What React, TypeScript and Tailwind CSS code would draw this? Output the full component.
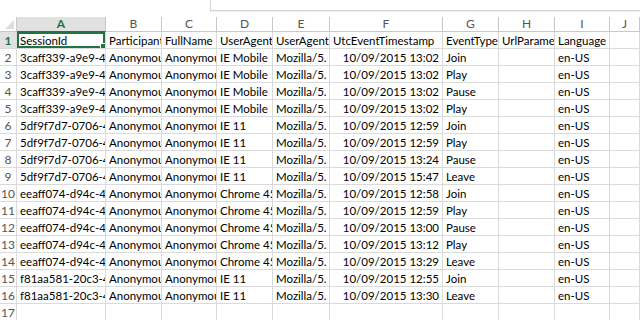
import React from "react";

const cols = ["A", "B", "C", "D", "E", "F", "G", "H", "I", "J"];

type Row = [string, string, string, string, string, string, string, string, string];

const header: Row = [
  "SessionId",
  "ParticipantId",
  "FullName",
  "UserAgentName",
  "UserAgentString",
  "UtcEventTimestamp",
  "EventType",
  "UrlParameters",
  "Language",
];

const rows: Row[] = [
  ["3caff339-a9e9-4", "Anonymous", "Anonymous", "IE Mobile", "Mozilla/5.", "10/09/2015 13:02", "Join", "", "en-US"],
  ["3caff339-a9e9-4", "Anonymous", "Anonymous", "IE Mobile", "Mozilla/5.", "10/09/2015 13:02", "Play", "", "en-US"],
  ["3caff339-a9e9-4", "Anonymous", "Anonymous", "IE Mobile", "Mozilla/5.", "10/09/2015 13:02", "Pause", "", "en-US"],
  ["3caff339-a9e9-4", "Anonymous", "Anonymous", "IE Mobile", "Mozilla/5.", "10/09/2015 13:02", "Play", "", "en-US"],
  ["5df9f7d7-0706-4", "Anonymous", "Anonymous", "IE 11", "Mozilla/5.", "10/09/2015 12:59", "Join", "", "en-US"],
  ["5df9f7d7-0706-4", "Anonymous", "Anonymous", "IE 11", "Mozilla/5.", "10/09/2015 12:59", "Play", "", "en-US"],
  ["5df9f7d7-0706-4", "Anonymous", "Anonymous", "IE 11", "Mozilla/5.", "10/09/2015 13:24", "Pause", "", "en-US"],
  ["5df9f7d7-0706-4", "Anonymous", "Anonymous", "IE 11", "Mozilla/5.", "10/09/2015 15:47", "Leave", "", "en-US"],
  ["eeaff074-d94c-4", "Anonymous", "Anonymous", "Chrome 45", "Mozilla/5.", "10/09/2015 12:58", "Join", "", "en-US"],
  ["eeaff074-d94c-4", "Anonymous", "Anonymous", "Chrome 45", "Mozilla/5.", "10/09/2015 12:59", "Play", "", "en-US"],
  ["eeaff074-d94c-4", "Anonymous", "Anonymous", "Chrome 45", "Mozilla/5.", "10/09/2015 13:00", "Pause", "", "en-US"],
  ["eeaff074-d94c-4", "Anonymous", "Anonymous", "Chrome 45", "Mozilla/5.", "10/09/2015 13:12", "Play", "", "en-US"],
  ["eeaff074-d94c-4", "Anonymous", "Anonymous", "Chrome 45", "Mozilla/5.", "10/09/2015 13:29", "Leave", "", "en-US"],
  ["f81aa581-20c3-4", "Anonymous", "Anonymous", "IE 11", "Mozilla/5.", "10/09/2015 12:55", "Join", "", "en-US"],
  ["f81aa581-20c3-4", "Anonymous", "Anonymous", "IE 11", "Mozilla/5.", "10/09/2015 13:30", "Leave", "", "en-US"],
];

function Cell({ text, right, selected }: { text: string; right?: boolean; selected?: boolean }) {
  return (
    <div
      className={`relative h-[17px] overflow-hidden whitespace-nowrap border-r border-b border-[#dadada] px-[3px] leading-[17px] ${
        right ? "text-right" : ""
      } ${selected ? "shadow-[inset_0_0_0_2px_#217346]" : ""}`}
    >
      {text}
      {selected && (
        <div className="absolute right-0 bottom-0 h-[5px] w-[5px] border-t border-l border-white bg-[#217346]" />
      )}
    </div>
  );
}

function RowHead({ n, active }: { n: number; active?: boolean }) {
  return (
    <div
      className={`h-[17px] border-r border-b border-[#dadada] text-center text-[12px] leading-[17px] ${
        active ? "bg-[#e1e1e1] font-bold text-[#217346]" : "bg-white text-[#555]"
      }`}
    >
      {n}
    </div>
  );
}

export default function App() {
  return (
    <div
      className="h-[320px] w-[640px] overflow-hidden bg-white text-[11.5px] text-black"
      style={{ fontFamily: "Lato, 'Liberation Sans', sans-serif" }}
    >
      <div className="flex h-[17px]">
        <div className="w-[210px]" />
        <div className="h-[11px] flex-1 border-b border-l border-[#d4d4d4] shadow-[0_1px_0_#eeeeee]" />
      </div>

      <div className="grid grid-cols-[17px_89px_56px_55px_56px_57px_113px_56px_56px_55px_1fr]">
        <div className="flex h-[15px] items-end justify-end border-r border-b border-[#c8c8c8] bg-white pr-[2px] pb-[2px]">
          <svg width="9" height="9" viewBox="0 0 9 9">
            <path d="M9 0 L9 9 L0 9 Z" fill="#dcdcdc" />
          </svg>
        </div>
        {cols.map((c, i) => (
          <div
            key={c}
            className={`h-[15px] text-center text-[12px] leading-[14px] ${
              i === 0
                ? "border-r border-b border-r-[#c8c8c8] border-b-[#217346] bg-[#e1e1e1] font-bold text-[#217346]"
                : "border-r border-b border-[#c8c8c8] bg-white text-[#555]"
            }`}
          >
            {c}
          </div>
        ))}

        <RowHead n={1} active />
        {header.map((t, i) => (
          <Cell key={i} text={t} selected={i === 0} />
        ))}
        <Cell text="" />

        {rows.map((r, ri) => (
          <React.Fragment key={ri}>
            <RowHead n={ri + 2} />
            {r.map((t, i) => (
              <Cell key={i} text={t} right={i === 5} />
            ))}
            <Cell text="" />
          </React.Fragment>
        ))}

        <RowHead n={17} />
        {cols.map((c) => (
          <Cell key={c} text="" />
        ))}
      </div>
    </div>
  );
}
